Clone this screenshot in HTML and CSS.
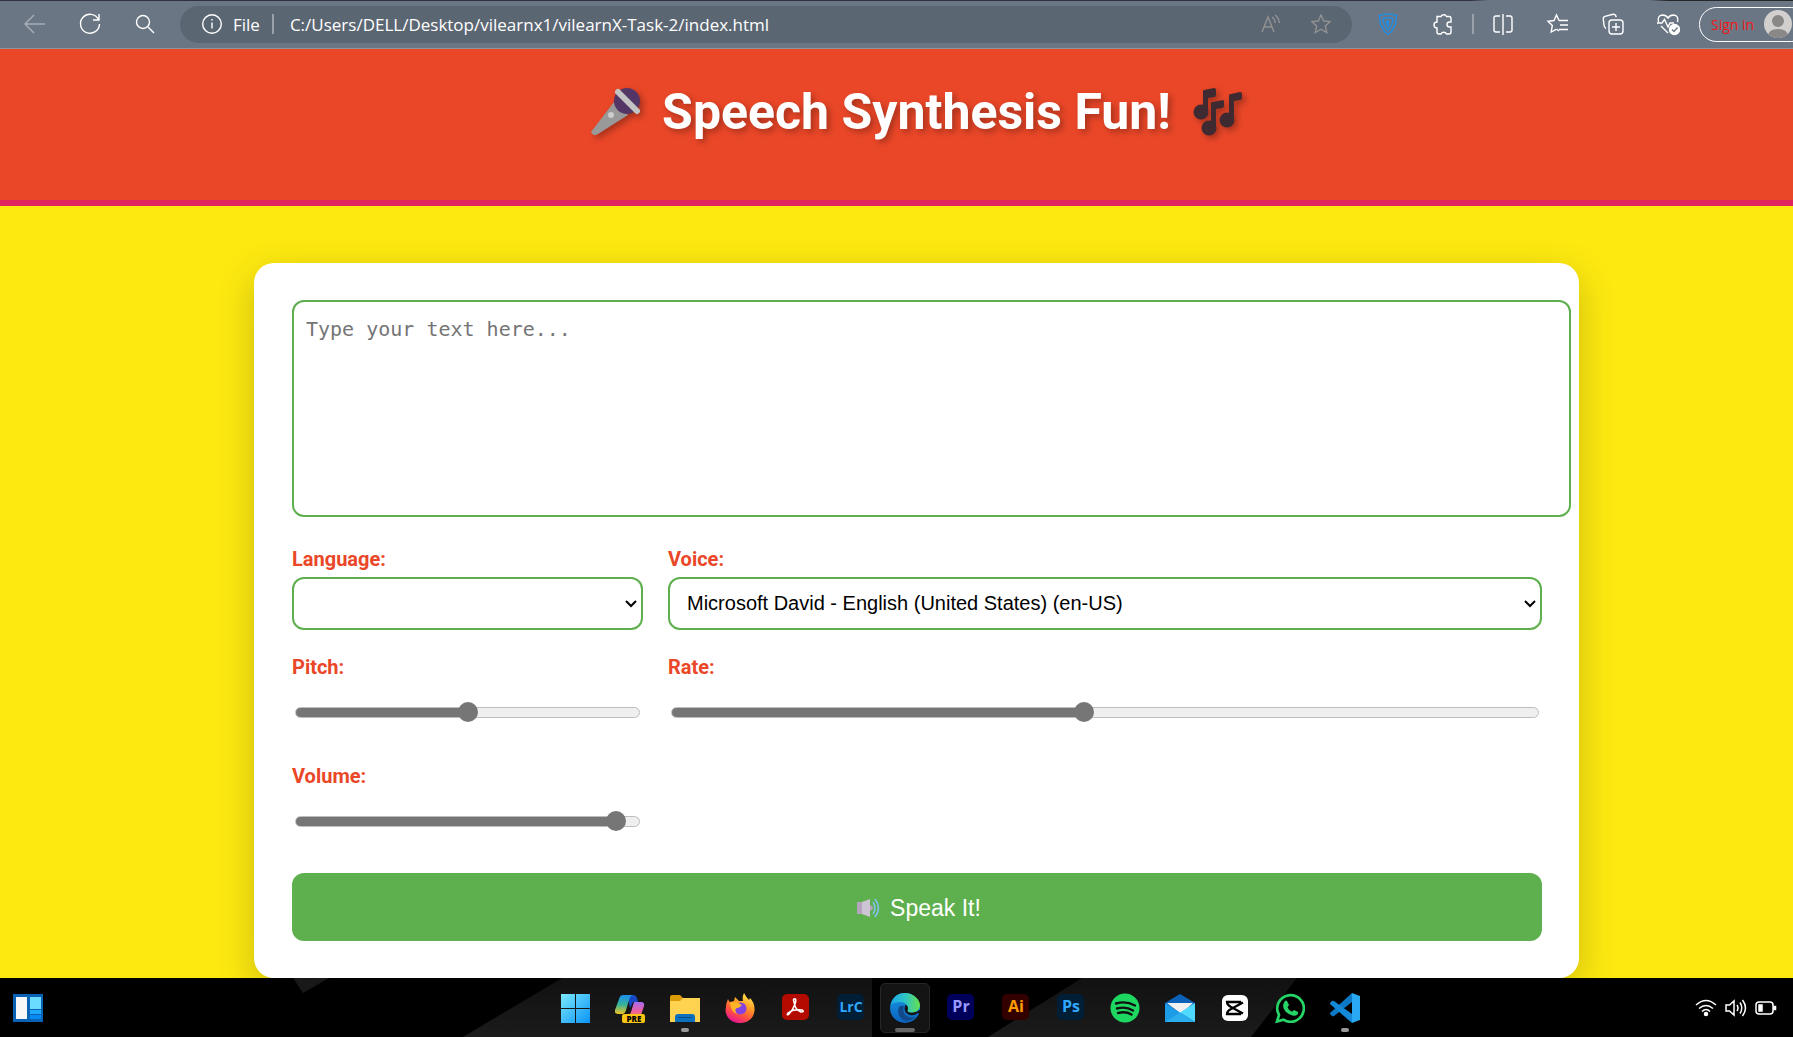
FILE: index.html
```html
<!DOCTYPE html>
<html lang="en">
<head>
<meta charset="utf-8">
<meta name="viewport" content="width=device-width, initial-scale=1">
<title>Speech Synthesis Fun!</title>
<link rel="stylesheet" href="styles.css">
</head>
<body>
<nav class="toolbar" aria-label="Browser">
  <button class="tool tool-dim" aria-label="Back"><svg width="24" height="24" viewBox="0 0 24 24"><path d="M22 12H2.500M11 3 2 12l9 9"/></svg></button>
  <button class="tool" aria-label="Reload"><svg width="24" height="24" viewBox="0 0 24 24"><path d="M20.500 7.500A9.500 9.500 0 1 0 21.500 12M21 2v6h-6"/></svg></button>
  <button class="tool" aria-label="Search"><svg width="24" height="24" viewBox="0 0 24 24"><circle cx="10" cy="10" r="6.500"/><path d="m15 15 6 6"/></svg></button>
  <div class="address">
    <svg width="20" height="20" viewBox="0 0 20 20"><circle cx="10" cy="10" r="9.300"/><path d="M10 8.500v6M10 5v1.600"/></svg>
    <label class="scheme" for="url">File</label>
    <span class="rule"></span>
    <input class="url" id="url" type="text" value="C:/Users/DELL/Desktop/vilearnx1/vilearnX-Task-2/index.html">
    <button class="inline-tool" aria-label="Read aloud"><svg width="20" height="20" viewBox="0 0 20 20"><path d="M1 18 7 3l6 15M3 13h8M11 3q3 2 3 6M14 1q4 3 4.500 8"/></svg></button>
    <button class="inline-tool" aria-label="Add to favorites"><svg width="20" height="20" viewBox="0 0 20 20"><path d="m10 1 2.700 6 6.500.6-4.900 4.400 1.400 6.500L10 15.200l-5.700 3.300L5.700 12 .8 7.600 7.300 7z"/></svg></button>
  </div>
  <button class="tool tool-first" aria-label="Shield"><svg width="24" height="24" viewBox="0 0 24 24"><g stroke="#1f8fe8"><path d="M3.500 3.500q8.500-3 17 0 0 13-8.500 19-8.500-6-8.500-19z"/><path d="M7 6.500q5-1.500 10 0-.5 7.500-5 12-4.500-4.500-5-12z"/></g><path fill="#1f8fe8" stroke="none" d="M9.500 8.500h3.500v7H12q-2.300-3-2.500-7z"/></svg></button>
  <button class="tool" aria-label="Extensions"><svg width="24" height="24" viewBox="0 0 24 24"><path d="M6 4.500h4a3 3 0 0 1 5.500 0H18q2 0 2 2v3.500h-1.500a2.500 2.500 0 0 0 0 5H20V20q0 2-2 2h-2.500a3 3 0 0 0-5.500 0H8q-2 0-2-2v-4a3 3 0 0 1 0-6z"/></svg></button>
  <span class="rule rule-tools"></span>
  <button class="tool" aria-label="Split screen"><svg width="24" height="24" viewBox="0 0 24 24"><path d="M9 4H5Q3 4 3 6v12q0 2 2 2h4M15 4h4q2 0 2 2v12q0 2-2 2h-4M12 2v21"/></svg></button>
  <button class="tool" aria-label="Favorites"><svg width="24" height="24" viewBox="0 0 24 24"><path d="M13 8.500 10.500 3 8 8.500l-6 .8 4.300 4.200L5.200 20l5-2.700M13 8.500h9M14 13h8M13 17.500h9M10.500 17l2.500 2"/></svg></button>
  <button class="tool" aria-label="Collections"><svg width="24" height="24" viewBox="0 0 24 24"><rect x="8" y="8" width="14" height="14" rx="3"/><path d="M15 11v8M11 15h8M5 16.500Q3 15.500 3 13L2.300 7Q2 5 4 4.300l8-2q2-.3 2.800 1.500l.4 1.500"/></svg></button>
  <button class="tool" aria-label="Browser essentials"><svg width="24" height="24" viewBox="0 0 24 24"><path d="M2.500 10Q1 3.500 6.500 3 10 3 12 6q2-3 5.500-3Q23 3.500 21.500 10M5 14l7 7M1 11h5l2.500-3.500L12 15l2-4h4"/><circle cx="18.500" cy="17.500" r="5" fill="#fff"/><path stroke="#6b7684" d="m16 17.500 2 2 3.500-4"/></svg></button>
  <button class="sign-in">Sign in
    <svg width="28" height="28" viewBox="0 0 28 28"><clipPath id="avatar"><circle cx="14" cy="14" r="14"/></clipPath><g clip-path="url(#avatar)" stroke="none"><path fill="#d2d0ce" d="M0 0h28v28H0z"/><circle cx="14" cy="11" r="6" fill="#8a8886"/><path fill="#8a8886" d="M4 28q-1-9 10-9t10 9z"/></g></svg>
  </button>
</nav>

<header class="banner">
  <h1 class="title">
    <svg class="title-icon" width="50" height="50" viewBox="0 0 50 50"><path fill="#999" d="M24 15 38 28 8 47Q3 50 1 45z"/><ellipse cx="37" cy="14" rx="13" ry="13" fill="#533566"/><path d="m28 5 19 19" stroke="#c3c3c3" stroke-width="6" stroke-linecap="round"/><circle cx="21" cy="28" r="3" fill="#ccc"/></svg>
    <span>Speech Synthesis Fun!</span>
    <svg class="title-icon" width="50" height="50" viewBox="0 0 50 50" fill="#402a32"><ellipse cx="8" cy="25" rx="7.500" ry="7.500"/><ellipse cx="16" cy="41" rx="7.500" ry="7.500"/><ellipse cx="34" cy="33" rx="7.500" ry="7.500"/><path d="M10 4Q10 3 11 3l10-2q2 0 2 2v5q0 2-2 2l-6 1v15h-5zM18 16q0-1 2-1l10-2q1 0 1 2v4q0 2-2 2l-6 1v20h-5zM36 8q0-1 2-1l9-2q2 0 2 2v4q0 2-2 2l-6 1v20h-5z"/></svg>
  </h1>
</header>

<main class="page">
  <form class="card">
    <textarea class="field speech-text" aria-label="Text to speak" placeholder="Type your text here..."></textarea>
    <div class="controls">
      <div class="control">
        <label for="language">Language:</label>
        <select class="field" id="language"><option></option></select>
      </div>
      <div class="control">
        <label for="voice">Voice:</label>
        <select class="field" id="voice"><option>Microsoft David - English (United States) (en-US)</option></select>
      </div>
      <div class="control">
        <label for="pitch">Pitch:</label>
        <input class="slider" id="pitch" type="range" min="0" max="100" step="0.5" value="50" style="--fill: 50%">
      </div>
      <div class="control">
        <label for="rate">Rate:</label>
        <input class="slider" id="rate" type="range" min="0" max="100" step="0.5" value="47.5" style="--fill: 47.5%">
      </div>
      <div class="control">
        <label for="volume">Volume:</label>
        <input class="slider" id="volume" type="range" min="0" max="100" step="0.5" value="96" style="--fill: 95%">
      </div>
    </div>
    <button class="speak" type="button">
      <svg width="24" height="20" viewBox="0 0 24 20"><path fill="#b4a3bd" d="M1 4h5v12H1z"/><path fill="#cdc4d6" d="m6 4 8-3v18l-8-3z"/><path fill="#b4a3bd" d="M14 7q3 1 3 3t-3 3z"/><path d="M17 4q4 6 0 12M19 1q7 9 0 18" fill="none" stroke="#83c3f5" stroke-width="1.500"/></svg>
      Speak It!
    </button>
  </form>
</main>

<footer class="taskbar">
  <svg class="wallpaper" viewBox="0 0 1793 59" preserveAspectRatio="none"><defs><linearGradient id="facet" x2="0" y2="1"><stop stop-color="#111"/><stop offset="1" stop-color="#1b1b1b"/></linearGradient></defs><path fill="#191919" d="M293 0h36l-26 15z"/><path fill="url(#facet)" d="M562 0h310v59H463zM1082 0h215l-46 59H988z"/></svg>
  <button class="widgets" aria-label="Widgets"><svg width="30" height="28" viewBox="0 0 30 28"><path fill="#0a62b5" d="M0 0h30v28H0z"/><path fill="#f7f7f7" d="M3 3h11v22H3z"/><path fill="#69dcff" d="M17 3h11v12H17z"/><path fill="#1eaafc" d="M17 16h11v4H17z"/><path fill="#078af2" d="M17 21h11v4H17z"/></svg></button>
  <div class="apps">
    <button class="app" aria-label="Start"><svg viewBox="0 0 30 30"><defs><linearGradient id="win" x2="1" y2="1"><stop stop-color="#7be9ff"/><stop offset="1" stop-color="#0a93f5"/></linearGradient></defs><path fill="url(#win)" d="M1 1h14v14H1zM16 1h14v14H16zM1 16h14v14H1zM16 16h14v14H16z"/></svg></button>
    <button class="app" aria-label="Copilot"><svg viewBox="0 0 30 30"><defs><linearGradient id="co1" x2="0" y2="1"><stop stop-color="#1c8cf0"/><stop offset=".5" stop-color="#35b39a"/><stop offset="1" stop-color="#f3c420"/></linearGradient><linearGradient id="co2" x2="0" y2="1"><stop stop-color="#a86af0"/><stop offset=".6" stop-color="#f0609c"/><stop offset="1" stop-color="#f98b50"/></linearGradient></defs><path fill="#1747c4" d="M12 2h6q3 0 4 3l1 4h-5l-3 6z"/><path fill="url(#co1)" d="M8 2h10q-3 1-4 5l-3 10q-1 4-4 4H3q-4 0-3-4L4 6q1-4 4-4z"/><path fill="url(#co2)" d="M19 9h7q4 0 3 4l-3 9q-1 3-4 3H12q3-2 4-6z"/><rect x="7" y="21" width="23" height="9" rx="2" fill="#fdc513"/><text x="19" y="29" class="tag">PRE</text></svg></button>
    <button class="app app-open" aria-label="File Explorer"><svg viewBox="0 0 30 30"><path fill="#dc9b08" d="M0 4q0-2 2-2h8l3 3h13q2 0 2 2v6H0z"/><path fill="#ffd34f" d="M0 8h10l3-3h17v24H0z"/><path fill="#0b70bd" d="M5 29v-5q0-3 3-3h14q3 0 3 3v5z"/><path fill="#084d88" d="M8 24h14v1H8z"/></svg></button>
    <button class="app" aria-label="Firefox"><svg viewBox="0 0 30 30"><defs><linearGradient id="ff" x1=".8" y1="0" x2=".3" y2="1"><stop stop-color="#fff04f"/><stop offset=".4" stop-color="#ff9a25"/><stop offset=".7" stop-color="#ff5040"/><stop offset="1" stop-color="#e5109a"/></linearGradient></defs><path fill="url(#ff)" d="M3 6q1 3 2 3l4-1 1-4 4 4 4 0q-1-4 1-8 2 4 5 7l1-2q5 5 4.500 12.500C29 25 23 30 15 30S1 25 .5 17.500Q.5 11 3 6z"/><circle cx="15.500" cy="15.500" r="6" fill="#8443e0"/><path fill="#ffb526" d="M5 10q5-3 12 2-3 4-6 3-2 4 2 6-7-1-8-11z"/></svg></button>
    <button class="app" aria-label="Acrobat"><svg viewBox="0 0 30 30"><rect x="2" y="1" width="27" height="26" rx="5" fill="#b30b00"/><path d="M14 6q3-1 1 5-2 6-6 10-3 2-1-1 5-4 14-3 3 2-1 2-6-2-7-10-1-3 0-3z" fill="none" stroke="#fff" stroke-width="1.600"/></svg></button>
    <button class="app" aria-label="Lightroom Classic"><svg viewBox="0 0 30 30"><rect x="2" y="1" width="27" height="26" rx="5" fill="#001e36"/><text x="16" y="19" class="adobe adobe-small" fill="#31a8ff">LrC</text></svg></button>
    <button class="app app-active" aria-label="Edge"><svg viewBox="0 0 30 30"><defs><linearGradient id="ed1"><stop stop-color="#1ba9e8"/><stop offset=".5" stop-color="#2fc5c5"/><stop offset="1" stop-color="#65e04c"/></linearGradient><linearGradient id="ed2" x2="0" y2="1"><stop stop-color="#1796e0"/><stop offset="1" stop-color="#0b62c0"/></linearGradient></defs><circle cx="15" cy="15" r="15" fill="url(#ed2)"/><path fill="url(#ed1)" d="M1 12C2 4 8 0 15 0c9 0 15 7 15 12 0 7-8 9-12 7-2-1 0-2 0-4 0-3-3-6-8-6-4 0-7 1-9 3z"/><path fill="#114a8b" d="M9 14q-3 7 3 12t15-3q-5 3-10 0t-3-10q-3-1-5 1z"/><path fill="#141414" d="M15 12q-2 8 5 10 4 1 8-2l2 1V17q-6 4-12 2-1-1 0-3 0-4-3-4z"/></svg></button>
    <button class="app" aria-label="Premiere Pro"><svg viewBox="0 0 30 30"><rect x="2" y="1" width="27" height="26" rx="5" fill="#00005b"/><text x="16" y="19" class="adobe" fill="#9999ff">Pr</text></svg></button>
    <button class="app" aria-label="Illustrator"><svg viewBox="0 0 30 30"><rect x="2" y="1" width="27" height="26" rx="5" fill="#330000"/><text x="16" y="19" class="adobe" fill="#ff9a00">Ai</text></svg></button>
    <button class="app" aria-label="Photoshop"><svg viewBox="0 0 30 30"><rect x="2" y="1" width="27" height="26" rx="5" fill="#001e36"/><text x="16" y="19" class="adobe" fill="#31a8ff">Ps</text></svg></button>
    <button class="app" aria-label="Spotify"><svg viewBox="0 0 30 30"><circle cx="15" cy="15" r="14.500" fill="#1ed760"/><path d="M6 10.500q10-3 19 2M7 15.500q9-2.500 16 2M8 20q8-2 13.500 1.500" fill="none" stroke="#111" stroke-width="2.400" stroke-linecap="round"/></svg></button>
    <button class="app" aria-label="Mail"><svg viewBox="0 0 30 30"><path fill="#0b62b8" d="M0 10 15 1l15 9v5H0z"/><path fill="#f2f2f2" d="M2 10h26L16 21z"/><path fill="#1c9be6" d="m0 10 30 19H0z"/><path fill="#50d9ff" d="M30 10v19L15 19.500z"/><path fill="#2baeee" d="m0 29 15-9.500L30 29z"/></svg></button>
    <button class="app" aria-label="CapCut"><svg viewBox="0 0 30 30"><rect x="2" y="2" width="26" height="26" rx="6" fill="#fff"/><path d="M23 9.500 11 16q-4 2-4 5h13v-2.500M23 20.500 11 14Q7 12 7 9h13v2.500" fill="none" stroke="#000" stroke-width="2.300"/></svg></button>
    <button class="app" aria-label="WhatsApp"><svg viewBox="0 0 30 30"><path d="M2 28.500 4 22A13.300 13.300 0 1 1 8.500 26.700z" fill="none" stroke="#25d366" stroke-width="2.700"/><path fill="#25d366" d="M10 8q1-1 2 0l2 4-1.500 2.200q1 3 4.500 4.500L19 17l4 2q.5 1-.5 2.500-2 2-5 1Q9 20 8 13q0-3 2-5z"/></svg></button>
    <button class="app app-open" aria-label="Visual Studio Code"><svg viewBox="0 0 30 30"><path fill="#0d78c6" d="M0 20 22 0v9L4 23q-1 .6-2 0l-2-2z"/><path fill="#1389d8" d="m0 10 2-2q1-.6 2 0l18 13v9L0 11z"/><path fill="#2aa8f2" d="m22 0 8 3v24l-8 3z"/></svg></button>
  </div>
  <div class="tray">
    <svg width="22" height="20" viewBox="0 0 22 20"><path d="M1 7q10-9 20 0M4 10.500q7-6 14 0M7 13.500q4-4 8 0"/><circle cx="11" cy="16" r="1.500" fill="#fff"/></svg>
    <svg width="22" height="20" viewBox="0 0 22 20"><path d="M1 7h3.500L9 3v14l-4.500-4H1zM12 7q2 3 0 6M15 4.500q3.500 5.500 0 11M17.500 2q6 8 0 16"/></svg>
    <svg width="22" height="20" viewBox="0 0 22 20"><rect x="1" y="4" width="17" height="12" rx="3"/><path fill="#fff" d="M4 7h3v6H4zM19 8.500h1.500v3H19z"/></svg>
  </div>
</footer>
</body>
</html>
```
FILE: styles.css
```css
* {
  box-sizing: border-box;
}

body {
  margin: 0;
  min-height: 100vh;
  display: flex;
  flex-direction: column;
  overflow-x: hidden;
  background: #fde910;
  font-family: Roboto, sans-serif;
}

button {
  padding: 0;
  border: 0;
  background: none;
  font: inherit;
}

svg {
  display: block;
  flex: none;
}

/* Browser toolbar */
.toolbar {
  display: flex;
  align-items: center;
  height: 49px;
  padding-left: 7px;
  overflow: hidden;
  border-bottom: 1px solid #8f95a0;
  background: linear-gradient(90deg, #2f3040 82%, #6b7684 83%, #6b7684 92%, #25272c 93%) top / 100% 1px no-repeat, #6b7684;
  font-family: "Open Sans", sans-serif;
}

.toolbar svg {
  fill: none;
  stroke: #fff;
  stroke-width: 1.4;
}

.tool {
  display: flex;
  justify-content: center;
  flex: 0 0 55px;
}

.tool-dim {
  opacity: 0.4;
}

.tool-first {
  margin-left: 8px;
}

.address {
  display: flex;
  align-items: center;
  flex: 1;
  min-width: 0;
  height: 37px;
  margin-left: 8px;
  padding: 0 21px 0 22px;
  border-radius: 19px;
  background: #5b6673;
  color: #fff;
  font-size: 17px;
}

.scheme {
  margin-left: 11px;
}

.rule {
  flex: none;
  width: 2px;
  height: 20px;
  margin: 0 16px 0 12px;
  background: #9aa1aa;
}

.rule-tools {
  margin: 0 1px 0 2px;
}

.url {
  flex: 1;
  min-width: 0;
  padding: 0;
  border: 0;
  background: none;
  color: inherit;
  font: inherit;
}

.inline-tool {
  margin-left: 30px;
}

.inline-tool svg {
  stroke: #929292;
}

.sign-in {
  display: flex;
  align-items: center;
  gap: 10px;
  flex: none;
  width: 110px;
  height: 35px;
  margin: 0 -16px 0 4px;
  padding-left: 11px;
  border: 1px solid #fff;
  border-radius: 18px;
  color: #f01818;
  font-size: 14px;
}

/* Page header; the page is centred a little right of the window's middle */
.banner {
  padding: 33px 0 58px 40px;
  border-bottom: 6px solid #e0245e;
  background: #ea4728;
}

.title {
  display: flex;
  justify-content: center;
  gap: 22px;
  margin: 0;
  color: #fff;
  font-size: 50px;
  line-height: 60px;
  text-shadow: 3px 3px 6px rgba(0, 0, 0, 0.3);
}

.title-icon {
  margin-top: 5px;
  filter: drop-shadow(3px 3px 3px rgba(0, 0, 0, 0.3));
}

.page {
  flex: 1;
  padding: 57px 0 0 40px;
}

.card {
  width: 1325px;
  max-width: 100%;
  margin: 0 auto;
  padding: 37px;
  padding-left: 38px;
  border-radius: 20px;
  background: #fff;
  box-shadow: 0 12px 38px rgba(0, 0, 0, 0.2);
}

.field {
  border: 2px solid #5eaf4d;
  border-radius: 12px;
  background-color: #fff;
  color: #000;
}

.speech-text {
  display: block;
  width: calc(100% + 29px);
  height: 217px;
  padding: 15px 12px;
  resize: none;
  font: 20px/25px "DejaVu Sans Mono", monospace;
}

.speech-text::placeholder {
  color: #757575;
}

.controls {
  display: grid;
  grid-template-columns: 351px 1fr;
  gap: 25px;
  margin: 30px 0 25px;
}

.control label {
  display: block;
  margin-bottom: 6px;
  color: #ea4728;
  font-size: 20px;
  font-weight: 700;
  line-height: 24px;
}

select.field {
  display: block;
  width: 100%;
  height: 53px;
  padding: 0 30px 2px 17px;
  appearance: none;
  background: #fff url("data:image/svg+xml,%3Csvg xmlns='http://www.w3.org/2000/svg' width='12' height='8'%3E%3Cpath d='M1 1l5 5 5-5' fill='none' stroke='%23000' stroke-width='2'/%3E%3C/svg%3E") right 4px center no-repeat;
  font: 20px "Liberation Sans", sans-serif;
}

.slider {
  display: block;
  width: calc(100% - 6px);
  height: 54px;
  margin: 0 3px;
  appearance: none;
  background: none;
}

.slider::-webkit-slider-runnable-track {
  height: 11px;
  border: 1px solid #bdbdbd;
  border-radius: 6px;
  background: linear-gradient(90deg, #767676 var(--fill), #efefef var(--fill));
}

.slider::-webkit-slider-thumb {
  width: 20px;
  height: 20px;
  margin-top: -6px;
  appearance: none;
  border-radius: 50%;
  background: #767676;
}

.speak {
  display: flex;
  align-items: center;
  justify-content: center;
  gap: 10px;
  width: 100%;
  height: 68px;
  border-radius: 12px;
  background: #5eaf4d;
  color: #fff;
  font: 23px "Liberation Sans", sans-serif;
  padding: 2px 0 0 3px;
}

/* Taskbar */
.taskbar {
  position: relative;
  display: grid;
  grid-template-columns: 547fr 825px 421fr;
  align-items: center;
  height: 59px;
  background: #000;
}

.wallpaper {
  position: absolute;
  inset: 0;
  width: 100%;
  height: 100%;
}

.widgets,
.apps,
.tray {
  position: relative;
}

.widgets {
  justify-self: start;
  margin-left: 13px;
}

.apps {
  display: grid;
  grid-template-columns: repeat(15, 1fr);
  justify-items: center;
}

.app {
  position: relative;
  display: grid;
  place-items: center;
  width: 50px;
  height: 50px;
  border: 1px solid transparent;
  border-radius: 5px;
}

.app svg {
  width: 30px;
  height: 30px;
}

.app-active {
  border-color: #262626;
  background: #141414;
}

.app-open::after,
.app-active::after {
  content: "";
  position: absolute;
  bottom: 0;
  width: 8px;
  height: 4px;
  border-radius: 2px;
  background: #9a9a9a;
}

.app-active::after {
  width: 20px;
  background: #666;
}

.adobe {
  font: 700 16px "Open Sans", sans-serif;
  text-anchor: middle;
}

.adobe-small {
  font-size: 14px;
}

.tag {
  font: 800 8px "Open Sans", sans-serif;
  text-anchor: middle;
}

.tray {
  display: flex;
  justify-content: flex-end;
  gap: 8px;
  padding-right: 16px;
}

.tray svg {
  fill: none;
  stroke: #fff;
  stroke-width: 1.5;
}
```
